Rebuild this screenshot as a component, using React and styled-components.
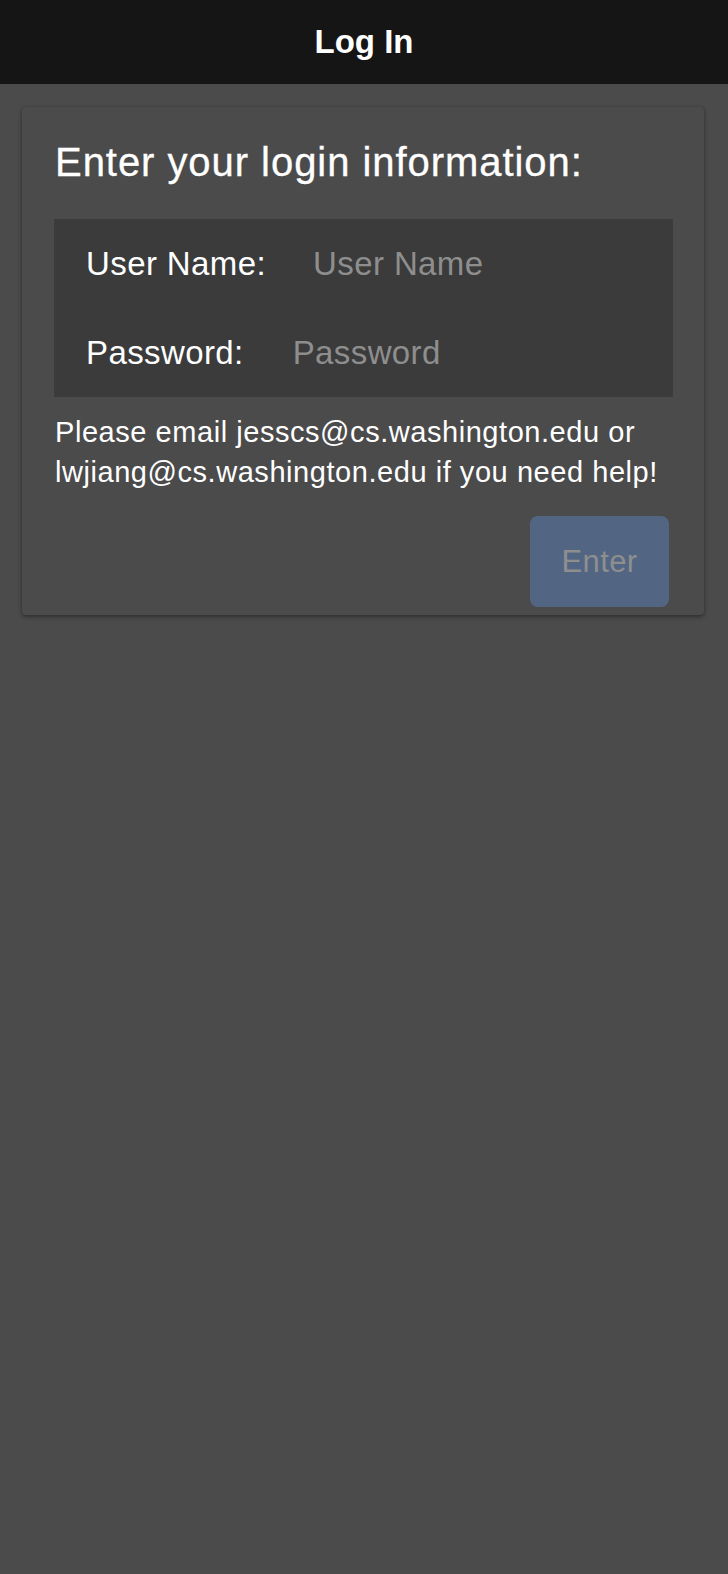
import React from "react";
import styled, { createGlobalStyle } from "styled-components";

const Global = createGlobalStyle`
  html, body {
    margin: 0;
    padding: 0;
    background: #4b4b4b;
    font-family: "Liberation Sans", Arial, Helvetica, sans-serif;
    color: #ffffff;
  }
  #root { min-height: 1574px; background: #4b4b4b; }
  input::placeholder { color: #8e8e8e; opacity: 1; }
`;

const Header = styled.header`
  height: 84px;
  background: #151515;
  display: flex;
  align-items: center;
  justify-content: center;
`;

const HeaderTitle = styled.h1`
  margin: 0;
  padding-bottom: 1px;
  font-family: "Liberation Sans", Arial, sans-serif;
  font-size: 33px;
  font-weight: 700;
  color: #ffffff;
`;

const Main = styled.main`
  padding: 23px 24px 0 22px;
`;

const Card = styled.section`
  background: #4b4b4b;
  border-radius: 4px;
  box-shadow: 0 2px 4px rgba(0, 0, 0, 0.35), 0 0 2px rgba(0, 0, 0, 0.15);
  padding: 32px 31px 8px 33px;
  display: flex;
  flex-direction: column;
`;

const Title = styled.h2`
  margin: 0;
  font-family: "Liberation Sans", Arial, sans-serif;
  font-size: 40px;
  line-height: 46px;
  font-weight: 400;
  letter-spacing: 0.95px;
  color: #ffffff;
  -webkit-text-stroke: 0.3px #ffffff;
`;

const FieldBox = styled.div`
  margin: 34px 0 0 -1px;
  background: #3b3b3b;
  padding: 0 0 0 32px;
  display: flex;
  flex-direction: column;
`;

const FieldRow = styled.label`
  height: 89px;
  display: flex;
  align-items: center;
`;

const FieldLabel = styled.span`
  font-size: 33px;
  letter-spacing: 0.4px;
  color: #ffffff;
  white-space: nowrap;
`;

const FieldInput = styled.input`
  flex: 1;
  min-width: 0;
  margin-left: ${(p) => p.$gap}px;
  padding: 0;
  border: none;
  outline: none;
  background: transparent;
  font-family: "Liberation Sans", Arial, sans-serif;
  font-size: 33px;
  letter-spacing: 0.4px;
  color: #ffffff;
`;

const Help = styled.p`
  margin: 15px 0 0 0;
  font-size: 29px;
  line-height: 40px;
  letter-spacing: 0.55px;
  color: #ffffff;
`;

const Actions = styled.div`
  display: flex;
  justify-content: flex-end;
  margin-top: 24px;
  padding-right: 4px;
`;

const EnterButton = styled.button`
  width: 139px;
  height: 91px;
  border: none;
  border-radius: 8px;
  background: #526684;
  color: #8e8e8e;
  font-family: "Liberation Sans", Arial, sans-serif;
  font-size: 31px;
  letter-spacing: 0.4px;
  padding: 0;
  cursor: default;
`;

export default function App() {
  return (
    <>
      <Global />
      <Header>
        <HeaderTitle>Log In</HeaderTitle>
      </Header>
      <Main>
        <Card>
          <Title>Enter your login information:</Title>
          <FieldBox>
            <FieldRow>
              <FieldLabel>User Name:</FieldLabel>
              <FieldInput $gap={47} type="text" placeholder="User Name" />
            </FieldRow>
            <FieldRow>
              <FieldLabel>Password:</FieldLabel>
              <FieldInput $gap={49} type="password" placeholder="Password" />
            </FieldRow>
          </FieldBox>
          <Help>
            Please email jesscs@cs.washington.edu or lwjiang@cs.washington.edu if you need help!
          </Help>
          <Actions>
            <EnterButton disabled>Enter</EnterButton>
          </Actions>
        </Card>
      </Main>
    </>
  );
}
